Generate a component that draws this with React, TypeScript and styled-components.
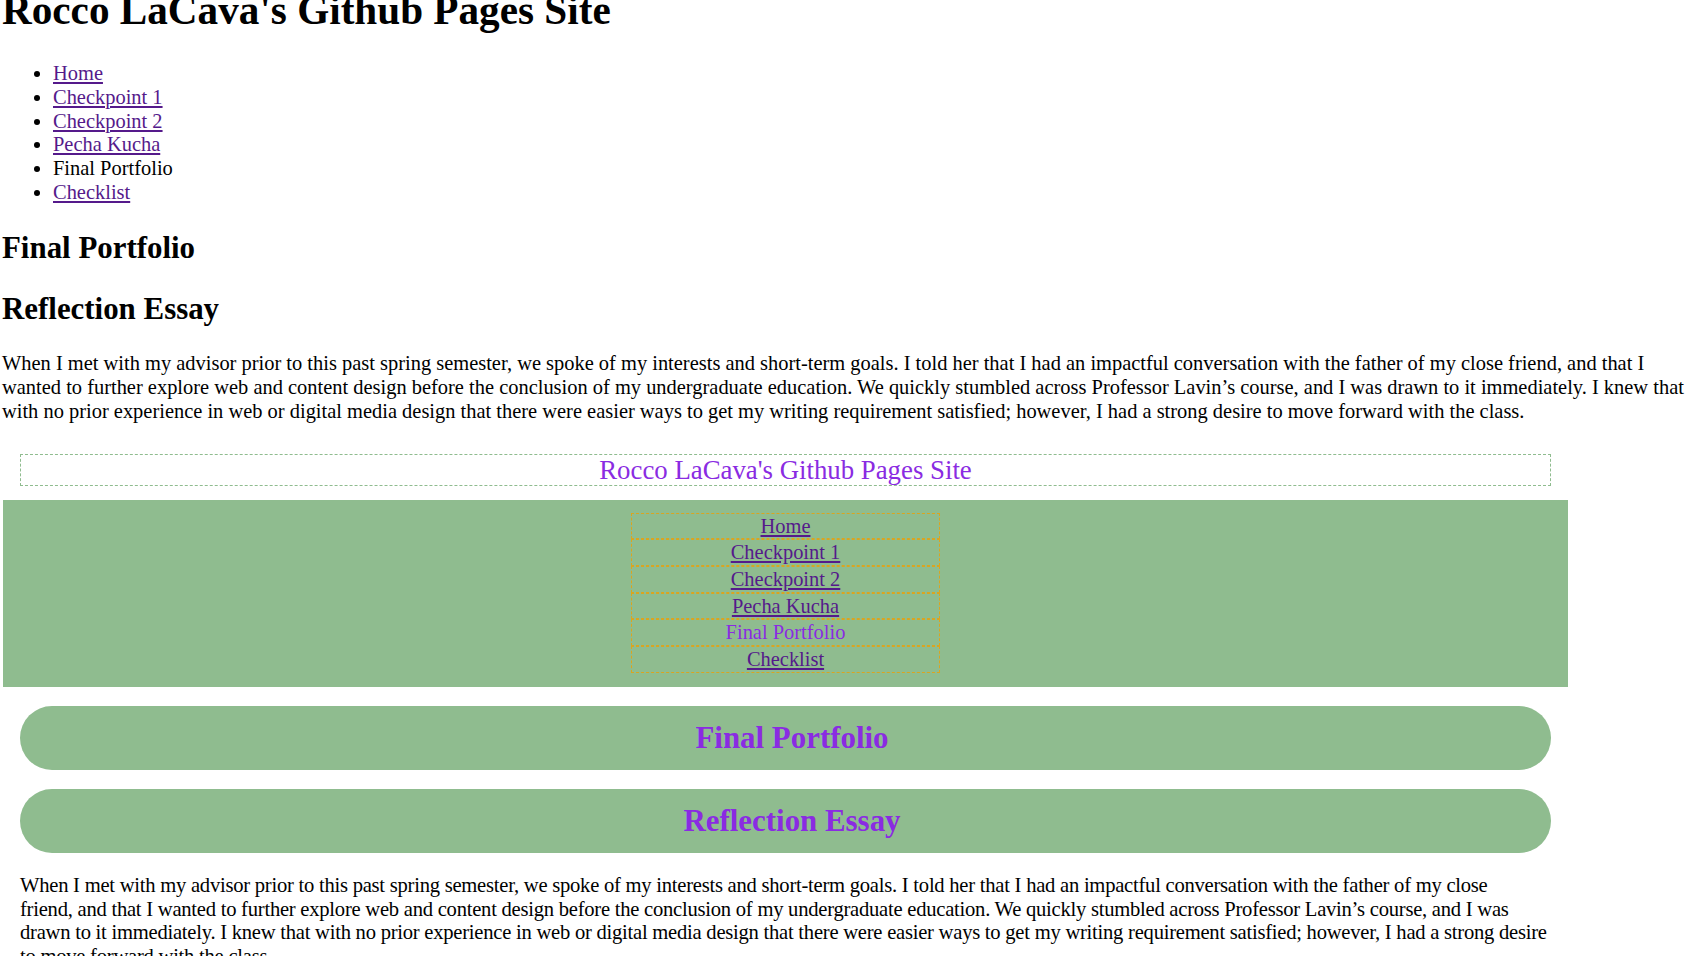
import React from 'react';
import styled, { createGlobalStyle } from 'styled-components';

const GlobalStyle = createGlobalStyle`
  html, body {
    margin: 0;
    padding: 0;
    background: #ffffff;
  }
  body {
    font-family: "Liberation Serif", "Times New Roman", serif;
    font-size: 20.45px;
    color: #000000;
    overflow: hidden;
  }
`;

const pages = [
  { name: 'Home', current: false },
  { name: 'Checkpoint 1', current: false },
  { name: 'Checkpoint 2', current: false },
  { name: 'Pecha Kucha', current: false },
  { name: 'Final Portfolio', current: true },
  { name: 'Checklist', current: false },
];

const essay =
  'When I met with my advisor prior to this past spring semester, we spoke of my interests and short-term goals. I told her that I had an impactful conversation with the father of my close friend, and that I wanted to further explore web and content design before the conclusion of my undergraduate education. We quickly stumbled across Professor Lavin\u2019s course, and I was drawn to it immediately. I knew that with no prior experience in web or digital media design that there were easier ways to get my writing requirement satisfied; however, I had a strong desire to move forward with the class.';

const themedEssay = essay.replace('friend, and', 'friend,\u00a0and');

const App: React.FC = () => {
  return (
    <>
      <GlobalStyle />
      <StyledPage>
        <StyledSiteTitle>Rocco LaCava's Github Pages Site</StyledSiteTitle>
        <StyledPlainList>
          {pages.map((page) => (
            <li key={page.name}>
              {page.current ? page.name : <StyledLink href="#">{page.name}</StyledLink>}
            </li>
          ))}
        </StyledPlainList>
        <StyledPlainHeading>Final Portfolio</StyledPlainHeading>
        <StyledPlainHeading>Reflection Essay</StyledPlainHeading>
        <StyledPlainText>{essay}</StyledPlainText>

        <StyledThemed>
          <StyledBanner>
            <StyledBannerTitle>Rocco LaCava's Github Pages Site</StyledBannerTitle>
          </StyledBanner>
          <StyledNavPanel>
            <StyledNavList>
              {pages.map((page) => (
                <StyledNavItem key={page.name} $current={page.current}>
                  {page.current ? page.name : <StyledLink href="#">{page.name}</StyledLink>}
                </StyledNavItem>
              ))}
            </StyledNavList>
          </StyledNavPanel>
          <StyledPill>Final Portfolio</StyledPill>
          <StyledPill>Reflection Essay</StyledPill>
          <StyledEssay>{themedEssay}</StyledEssay>
        </StyledThemed>
      </StyledPage>
    </>
  );
};

const StyledPage = styled.div`
  padding-left: 2px;
`;

const StyledSiteTitle = styled.h1`
  font-size: 41.2px;
  font-weight: 700;
  line-height: 47.3px;
  margin: -12.6px 0 27.4px;
`;

const StyledLink = styled.a`
  color: #551a8b;
  text-decoration: underline;
`;

const StyledPlainList = styled.ul`
  margin: 20.6px 0;
  padding-left: 51px;
  line-height: 23.7px;
`;

const StyledPlainHeading = styled.h2`
  font-size: 30.9px;
  font-weight: 700;
  line-height: 35.5px;
  margin: 25.6px 0;
`;

const StyledPlainText = styled.p`
  margin: 20.6px 0;
  line-height: 23.7px;
`;

const StyledThemed = styled.div`
  margin: 0 139px 0 18px;
`;

const StyledBanner = styled.header`
  margin: 30.6px 0 14px;
  border: 1px dashed #8fbc8f;
  text-align: center;
`;

const StyledBannerTitle = styled.div`
  font-size: 26.8px;
  line-height: 30px;
  color: #8a2be2;
`;

const StyledNavPanel = styled.nav`
  margin: 0 -17px 19px;
  padding: 13px 0 14px;
  background: #8fbc8f;
  display: flex;
  justify-content: center;
`;

const StyledNavList = styled.ul`
  list-style: none;
  margin: 0;
  padding: 0;
  width: 309px;
`;

const StyledNavItem = styled.li<{ $current: boolean }>`
  border: 1px dashed #daa520;
  text-align: center;
  line-height: 24.67px;
  color: ${(props) => (props.$current ? '#8a2be2' : '#551a8b')};
`;

const StyledPill = styled.h2`
  display: flex;
  align-items: center;
  justify-content: center;
  height: 64px;
  margin: 0 0 19px;
  padding-left: 13px;
  border-radius: 40px;
  background: #8fbc8f;
  color: #8a2be2;
  font-size: 30.9px;
  font-weight: 700;
`;

const StyledEssay = styled.p`
  margin: 21px 0 0;
  line-height: 23.7px;
  font-size: 20.6px;
  letter-spacing: -0.243px;
`;

export default App;
